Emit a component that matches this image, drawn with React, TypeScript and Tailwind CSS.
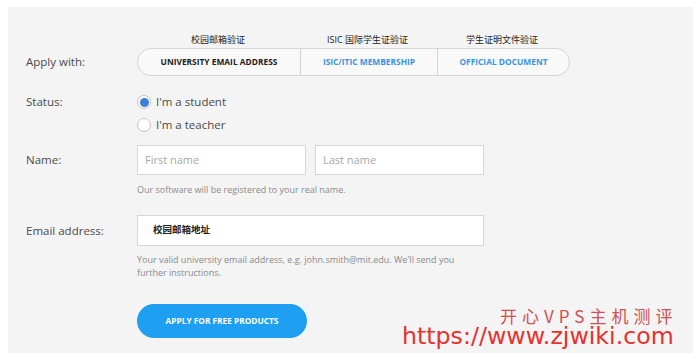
import React from 'react';

const font = { fontFamily: '"Open Sans", "Noto Sans CJK SC", sans-serif' };

function Radio({ checked, label }: { checked?: boolean; label: string }) {
    return (
        <label className="flex items-center h-[16px] gap-[5px]">
            <span className="w-[14px] h-[14px] rounded-full border border-[#c4c4c4] bg-white flex items-center justify-center">
                {checked && <span className="w-[9px] h-[9px] rounded-full bg-[#3b7fd9]" />}
            </span>
            <span className="text-[11.5px] text-[#4a4a4a]">{label}</span>
        </label>
    );
}

export default function App() {
    const tabs = [
        { cn: '校园邮箱验证', en: 'UNIVERSITY EMAIL ADDRESS', w: 'w-[162px]', active: true },
        { cn: 'ISIC 国际学生证验证', en: 'ISIC/ITIC MEMBERSHIP', w: 'w-[137px]' },
        { cn: '学生证明文件验证', en: 'OFFICIAL DOCUMENT', w: 'w-[132px]' },
    ];

    return (
        <div className="relative w-[700px] h-[364px] bg-white overflow-hidden" style={font}>
            <div className="absolute left-[8px] top-[7px] w-[685px] h-[346px] bg-[#f4f4f4]" />
            <div className="relative ml-[8px] mt-[7px] w-[685px] h-[346px] pl-[18px] pt-[24px]">
                {/* Apply with */}
                <div className="flex">
                    <div className="w-[111px] pt-[22px] text-[11.5px] text-[#4a4a4a]">Apply with:</div>
                    <div>
                        <div className="flex h-[17px] items-center">
                            {tabs.map((t) => (
                                <div key={t.en} className={`${t.w} text-center text-[9px] text-[#222]`}>
                                    {t.cn}
                                </div>
                            ))}
                        </div>
                        <div className="flex h-[28px] rounded-full border border-[#d5d5d5] bg-[#f9f9f9] overflow-hidden">
                            {tabs.map((t, i) => (
                                <div
                                    key={t.en}
                                    className={`${t.w} flex items-center justify-center text-[8.4px] font-bold ${
                                        i > 0 ? 'border-l border-[#d5d5d5]' : ''
                                    } ${t.active ? 'text-[#222]' : 'text-[#3a95e0]'}`}
                                >
                                    {t.en}
                                </div>
                            ))}
                        </div>
                    </div>
                </div>

                {/* Status */}
                <div className="flex mt-[18px]">
                    <div className="w-[111px] h-[16px] flex items-center text-[11.5px] text-[#4a4a4a]">Status:</div>
                    <div className="flex flex-col gap-[7px]">
                        <Radio checked label="I'm a student" />
                        <Radio label="I'm a teacher" />
                    </div>
                </div>

                {/* Name */}
                <div className="flex mt-[12px]">
                    <div className="w-[111px] h-[30px] flex items-center text-[11.5px] text-[#4a4a4a]">Name:</div>
                    <div>
                        <div className="flex gap-[9px]">
                            <div className="w-[169px] h-[30px] bg-white border border-[#d6d6d6] flex items-center px-[7px] text-[11px] text-[#a8a8a8]">
                                First name
                            </div>
                            <div className="w-[169px] h-[30px] bg-white border border-[#d6d6d6] flex items-center px-[7px] text-[11px] text-[#a8a8a8]">
                                Last name
                            </div>
                        </div>
                        <div className="mt-[8px] text-[9px] leading-[13px] text-[#8a8a8a]">
                            Our software will be registered to your real name.
                        </div>
                    </div>
                </div>

                {/* Email */}
                <div className="flex mt-[19px]">
                    <div className="w-[111px] h-[31px] flex items-center text-[11.5px] text-[#4a4a4a]">Email address:</div>
                    <div>
                        <div className="w-[347px] h-[31px] bg-white border border-[#d6d6d6] flex items-center px-[15px] text-[9.5px] font-bold text-[#222]">
                            校园邮箱地址
                        </div>
                        <div className="mt-[7px] w-[330px] text-[9px] leading-[13px] text-[#8a8a8a]">
                            Your valid university email address, e.g. john.smith@mit.edu. We'll send you further instructions.
                        </div>
                    </div>
                </div>

                {/* Button */}
                <div className="flex mt-[25px]">
                    <div className="w-[111px]" />
                    <button className="w-[170px] h-[34px] rounded-full bg-[#1e9ff2] text-white text-[8.3px] font-bold">
                        APPLY FOR FREE PRODUCTS
                    </button>
                </div>
            </div>

            {/* watermark */}
            <div className="absolute left-[402px] top-[325px] text-[23.7px] leading-none text-[#e8302c]" style={{ fontFamily: '"DejaVu Sans", sans-serif' }}>
                https://www.zjwiki.com
            </div>
            <div className="absolute left-[500px] top-[307px] text-[17px] leading-none text-[#c8262a] opacity-80 tracking-[5px]" style={{ fontFamily: '"Noto Sans CJK SC", sans-serif' }}>
                开心VPS主机测评
            </div>
        </div>
    );
}
